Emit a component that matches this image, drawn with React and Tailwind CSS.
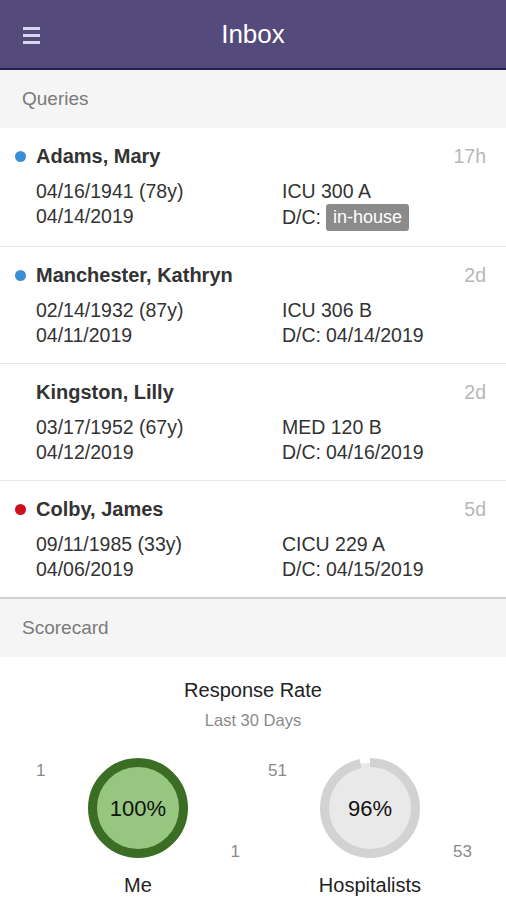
import React from "react";

const rows = [
  { name: "Adams, Mary", dot: "bg-[#3a8ed6]", time: "17h", dob: "04/16/1941 (78y)", adm: "04/14/2019", loc: "ICU 300 A", dc: null },
  { name: "Manchester, Kathryn", dot: "bg-[#3a8ed6]", time: "2d", dob: "02/14/1932 (87y)", adm: "04/11/2019", loc: "ICU 306 B", dc: "04/14/2019" },
  { name: "Kingston, Lilly", dot: null, time: "2d", dob: "03/17/1952 (67y)", adm: "04/12/2019", loc: "MED 120 B", dc: "04/16/2019" },
  { name: "Colby, James", dot: "bg-[#d0111b]", time: "5d", dob: "09/11/1985 (33y)", adm: "04/06/2019", loc: "CICU 229 A", dc: "04/15/2019" },
];

function Row({ r, last }) {
  return (
    <div className={`pt-4 pb-[15px] pl-[15px] pr-5 bg-white ${last ? "border-b-2 border-[#d0d0d0]" : "border-b border-[#e9e9e9]"}`}>
      <div className="flex items-center h-6">
        <div className="w-[11px] h-[11px] mr-[10px] flex-none">
          {r.dot && <div className={`w-[11px] h-[11px] rounded-full ${r.dot}`} />}
        </div>
        <div className="flex-1 text-[20px] font-bold text-[#333] leading-6">{r.name}</div>
        <div className="text-[19.5px] text-[#b7b7b7] leading-6">{r.time}</div>
      </div>
      <div className="mt-[11px] pl-[21px] grid grid-cols-[246px_1fr] text-[19.5px] text-[#333] leading-[25px]">
        <div>{r.dob}</div>
        <div>{r.loc}</div>
        <div>{r.adm}</div>
        <div className="flex items-center">
          <span>D/C:</span>
          {r.dc ? (
            <span className="ml-[5px]">{r.dc}</span>
          ) : (
            <span className="ml-[5px] inline-flex items-center h-[27px] px-[7px] rounded-[3px] bg-[#8b8b8b] text-white text-[18px]">in-house</span>
          )}
        </div>
      </div>
    </div>
  );
}

function Chart({ pct, ring, fill, left, right, label, partial }) {
  const r = 45.5;
  const c = 2 * Math.PI * r;
  return (
    <div className="w-[204px] flex flex-col items-center">
      <div className="w-full flex items-start justify-between text-[17px] text-[#8a8a8a]">
        <div className="mt-[3px] leading-5">{left}</div>
        <svg width="100" height="100" viewBox="0 0 100 100" className="flex-none">
          <circle cx="50" cy="50" r="45" fill={fill} />
          {partial ? (
            <circle
              cx="50"
              cy="50"
              r={r}
              fill="none"
              stroke={ring}
              strokeWidth="9"
              strokeDasharray={`${c * 0.965} ${c}`}
              transform="rotate(-90 50 50)"
            />
          ) : (
            <circle cx="50" cy="50" r={r} fill="none" stroke={ring} strokeWidth="9" />
          )}
          <text x="50" y="58" textAnchor="middle" fontSize="22" fill="#111" fontFamily="'Liberation Sans', Arial, sans-serif">{pct}</text>
        </svg>
        <div className="self-end mb-[-4px] leading-5">{right}</div>
      </div>
      <div className="mt-[15px] text-[20px] text-[#222] leading-6">{label}</div>
    </div>
  );
}

export default function App() {
  return (
    <div className="w-[506px] h-[900px] overflow-hidden bg-white" style={{ fontFamily: "'Liberation Sans', Arial, sans-serif" }}>
      <div className="h-[70px] bg-[#544b7c] border-b-2 border-[#221d55] flex items-center relative">
        <div className="absolute left-[23px] top-[27px] w-[17px] flex flex-col gap-[4px]">
          <div className="h-[3px] bg-[#d9d6e8]" />
          <div className="h-[3px] bg-[#d9d6e8]" />
          <div className="h-[3px] bg-[#d9d6e8]" />
        </div>
        <div className="w-full text-center text-white text-[26px] leading-8">Inbox</div>
      </div>
      <div className="h-[58px] bg-[#f5f5f5] flex items-center pl-[22px] text-[19px] text-[#7a7a7a]">Queries</div>
      {rows.map((r, i) => (
        <Row key={i} r={r} last={i === rows.length - 1} />
      ))}
      <div className="h-[58px] bg-[#f5f5f5] flex items-center pl-[22px] text-[19px] text-[#7a7a7a]">Scorecard</div>
      <div className="pt-[21px] flex flex-col items-center">
        <div className="text-[20px] text-[#222] leading-6">Response Rate</div>
        <div className="mt-2 text-[16.5px] text-[#8a8a8a] leading-5">Last 30 Days</div>
      </div>
      <div className="mt-7 pl-9 flex gap-[28px]">
        <Chart pct="100%" ring="#3c6d25" fill="#97c680" left="1" right="1" label="Me" />
        <Chart pct="96%" ring="#d2d2d2" fill="#e9e9e9" left="51" right="53" label="Hospitalists" partial />
      </div>
    </div>
  );
}
